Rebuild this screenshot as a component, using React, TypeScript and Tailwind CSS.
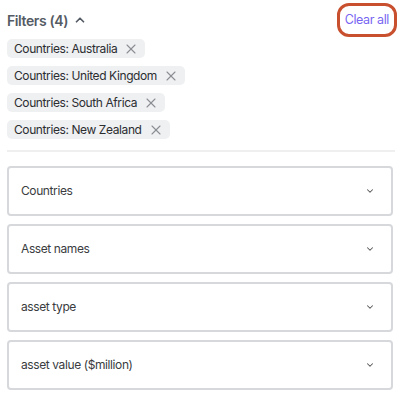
import { ChevronDown, ChevronUp, X } from "lucide-react";

const chips = [
	"Countries: Australia",
	"Countries: United Kingdom",
	"Countries: South Africa",
	"Countries: New Zealand",
];

const selects = ["Countries", "Asset names", "asset type", "asset value ($million)"];

export default function App() {
	return (
		<div
			className="w-[400px] h-[396px] bg-white px-[7px] pt-[3px]"
			style={{ fontFamily: "Inter, 'Liberation Sans', sans-serif" }}
		>
			<div className="flex items-center justify-between h-[34px]">
				<div className="flex items-center gap-[5px] text-[14px] tracking-[-0.4px] font-semibold text-[#555b64]">
					<span>Filters (4)</span>
					<ChevronUp className="w-[14px] h-[14px]" strokeWidth={3} />
				</div>
				<button className="h-[34px] px-[5px] mr-[-4px] rounded-[12px] border-[3px] border-[#c9502f] text-[12.5px] tracking-[-0.4px] text-[#7866f2]">
					Clear all
				</button>
			</div>
			<div className="flex flex-col items-start gap-[8px] mt-[2px]">
				{chips.map((c) => (
					<div
						key={c}
						className="flex items-center gap-[6px] h-[19px] pl-[7px] pr-[6px] rounded-[5px] bg-[#eff0f2] text-[12px] tracking-[-0.4px] text-[#2b2d31]"
					>
						<span>{c}</span>
						<X className="w-[16px] h-[16px] text-[#8a8d92]" strokeWidth={1.6} />
					</div>
				))}
			</div>
			<div className="h-[2px] bg-[#efefef] mt-[11px] mr-[-2px]" />
			<div className="flex flex-col gap-[8px] mt-[14px]">
				{selects.map((s) => (
					<div
						key={s}
						className="flex items-center justify-between h-[50px] pl-[12px] pr-[16px] rounded-[4px] border-2 border-[#d6d8dc] text-[12px] tracking-[-0.4px] text-[#3a3c40]"
					>
						<span>{s}</span>
						<ChevronDown className="w-[10px] h-[10px] text-[#555]" strokeWidth={2.5} />
					</div>
				))}
			</div>
		</div>
	);
}
